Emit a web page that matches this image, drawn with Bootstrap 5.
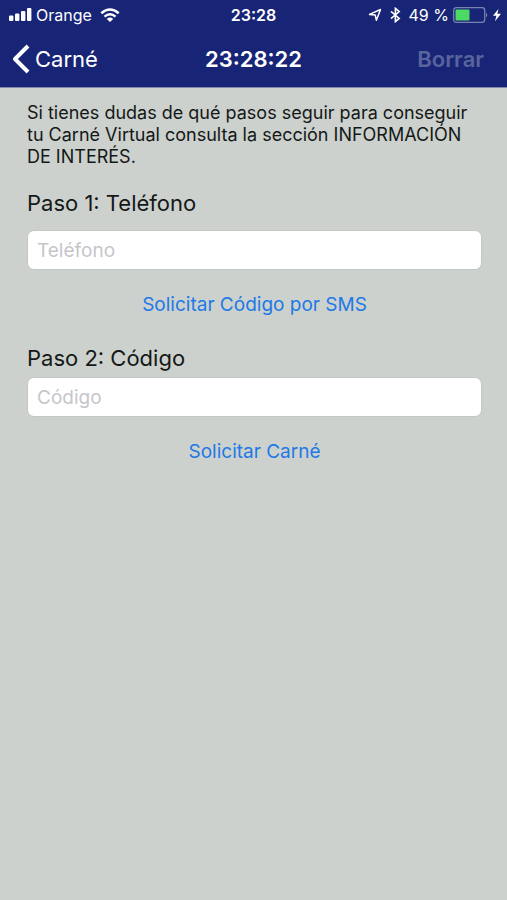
<!DOCTYPE html>
<html lang="es">
<head>
<meta charset="utf-8">
<meta name="viewport" content="width=device-width, initial-scale=1">
<title>Carné Virtual</title>
<link href="https://cdn.jsdelivr.net/npm/bootstrap@5.3.0/dist/css/bootstrap.min.css" rel="stylesheet">
<style>
  body { font-family: Inter, "Liberation Sans", sans-serif; background: #ccd1cd; color: #141817; }
  .top-area { background: #182576; color: #fff; border-bottom: 1px solid #7f88a8; }
  .status-row { height: 30px; font-size: 16px; line-height: 20px; padding: 0 6px; }
  .signal { margin-left: 3px; }
  .title-row { height: 57px; padding: 0 12px; }
  .side { flex: 1 1 0; }
  .clock-title, .back-link, .clear-btn { font-size: 22px; line-height: 28px; }
  .clear-btn { margin-right: 11px; }
  .clear-btn:disabled { color: #59649d; opacity: 1; }
  .content { padding: 14px 25px 0 27px; }
  .intro { font-size: 18px; line-height: 22px; margin-bottom: 20px; }
  .step-label { font-size: 22px; line-height: 30px; }
  .field { height: 40px; font-size: 19px; line-height: 24px; padding: 0 9px; border: 1px solid #c3c8c5; border-radius: 7px; background: #fff; }
  .field::placeholder { color: #c5c6cb; opacity: 1; }
  .action-row { padding: 21px 0 24px; }
  .action { font-size: 19px; line-height: 28px; color: #2079e6; }
</style>
</head>
<body class="min-vh-100">
<header class="top-area">
  <div class="status-row d-flex align-items-center">
    <div class="side d-flex align-items-center">
      <svg class="signal me-1" width="23" height="14" viewBox="0 0 23 14" fill="#fff" aria-hidden="true"><rect y="7.5" width="4.4" height="5.5" rx="1"/><rect x="6" y="5.5" width="4.4" height="7.5" rx="1"/><rect x="12" y="3" width="4.4" height="10" rx="1"/><rect x="18" width="4.4" height="13" rx="1"/></svg>
      <span>Orange</span>
      <svg class="ms-2" width="20" height="15" viewBox="0 0 20 15" fill="none" stroke="#fff" stroke-width="2.5" aria-hidden="true"><path d="M1.3 5.2Q10-2.3 18.7 5.2M4.5 8.6Q10 3.9 15.5 8.6"/><path d="M6.8 10.9Q10 8.3 13.2 10.9L10 14.1Z" fill="#fff" stroke="none"/></svg>
    </div>
    <span class="fw-semibold">23:28</span>
    <div class="side d-flex align-items-center justify-content-end">
      <svg width="14" height="14" viewBox="0 0 14 14" fill="none" stroke="#fff" stroke-width="1.5" stroke-linejoin="round" aria-hidden="true"><path d="M1.5 6.4 12.5 1.5 8.4 12.3 7.2 7Z"/></svg>
      <svg class="ms-2 me-2" width="11" height="16" viewBox="0 0 11 16" fill="none" stroke="#fff" stroke-width="1.6" aria-hidden="true"><path d="M1 4.3 9.2 11.4 5.4 14.6V1.4L9.2 4.6 1 11.7"/></svg>
      <span class="text-nowrap">49 %</span>
      <svg class="ms-1" width="36" height="16" viewBox="0 0 36 16" aria-hidden="true"><rect x=".7" y=".7" width="31" height="14.6" rx="2.5" fill="none" stroke="#7983b1" stroke-width="1.3"/><rect x="2.5" y="2.5" width="14" height="11" rx="1" fill="#4cda64"/><path d="M33 5.5Q35.5 8 33 10.5Z" fill="#7983b1"/></svg>
      <svg class="ms-1" width="8" height="14" viewBox="0 0 8 14" fill="#fff" aria-hidden="true"><path d="M5.4 1 0 7.8H3.4L2 13.2 8 5.8H4.4Z"/></svg>
    </div>
  </div>
  <nav class="title-row d-flex align-items-center" aria-label="Principal">
    <div class="side d-flex">
      <a href="#" class="back-link d-flex align-items-center text-white text-decoration-none">
        <svg class="me-1" width="19" height="30" viewBox="0 0 19 30" fill="none" stroke="#fff" stroke-width="4" stroke-linejoin="round" aria-hidden="true"><path d="M16 2 3 15 16 28"/></svg>Carné</a>
    </div>
    <h1 class="clock-title fw-semibold m-0">23:28:22</h1>
    <div class="side d-flex justify-content-end"><button type="button" class="clear-btn btn border-0 p-0 fw-semibold" disabled>Borrar</button></div>
  </nav>
</header>
<main class="content">
  <p class="intro">Si tienes dudas de qué pasos seguir para conseguir tu Carné Virtual consulta la sección INFORMACIÓN DE INTERÉS.</p>
  <form>
    <label for="telefono" class="step-label d-block mb-2 pb-1">Paso 1: Teléfono</label>
    <input id="telefono" type="tel" class="field form-control" placeholder="Teléfono">
    <div class="action-row text-center"><button type="button" class="action btn border-0 p-0">Solicitar Código por SMS</button></div>
    <label for="codigo" class="step-label d-block pb-1">Paso 2: Código</label>
    <input id="codigo" type="text" class="field form-control" placeholder="Código">
    <div class="action-row text-center"><button type="button" class="action btn border-0 p-0">Solicitar Carné</button></div>
  </form>
</main>
<script src="https://cdn.jsdelivr.net/npm/bootstrap@5.3.0/dist/js/bootstrap.bundle.min.js"></script>
</body>
</html>
